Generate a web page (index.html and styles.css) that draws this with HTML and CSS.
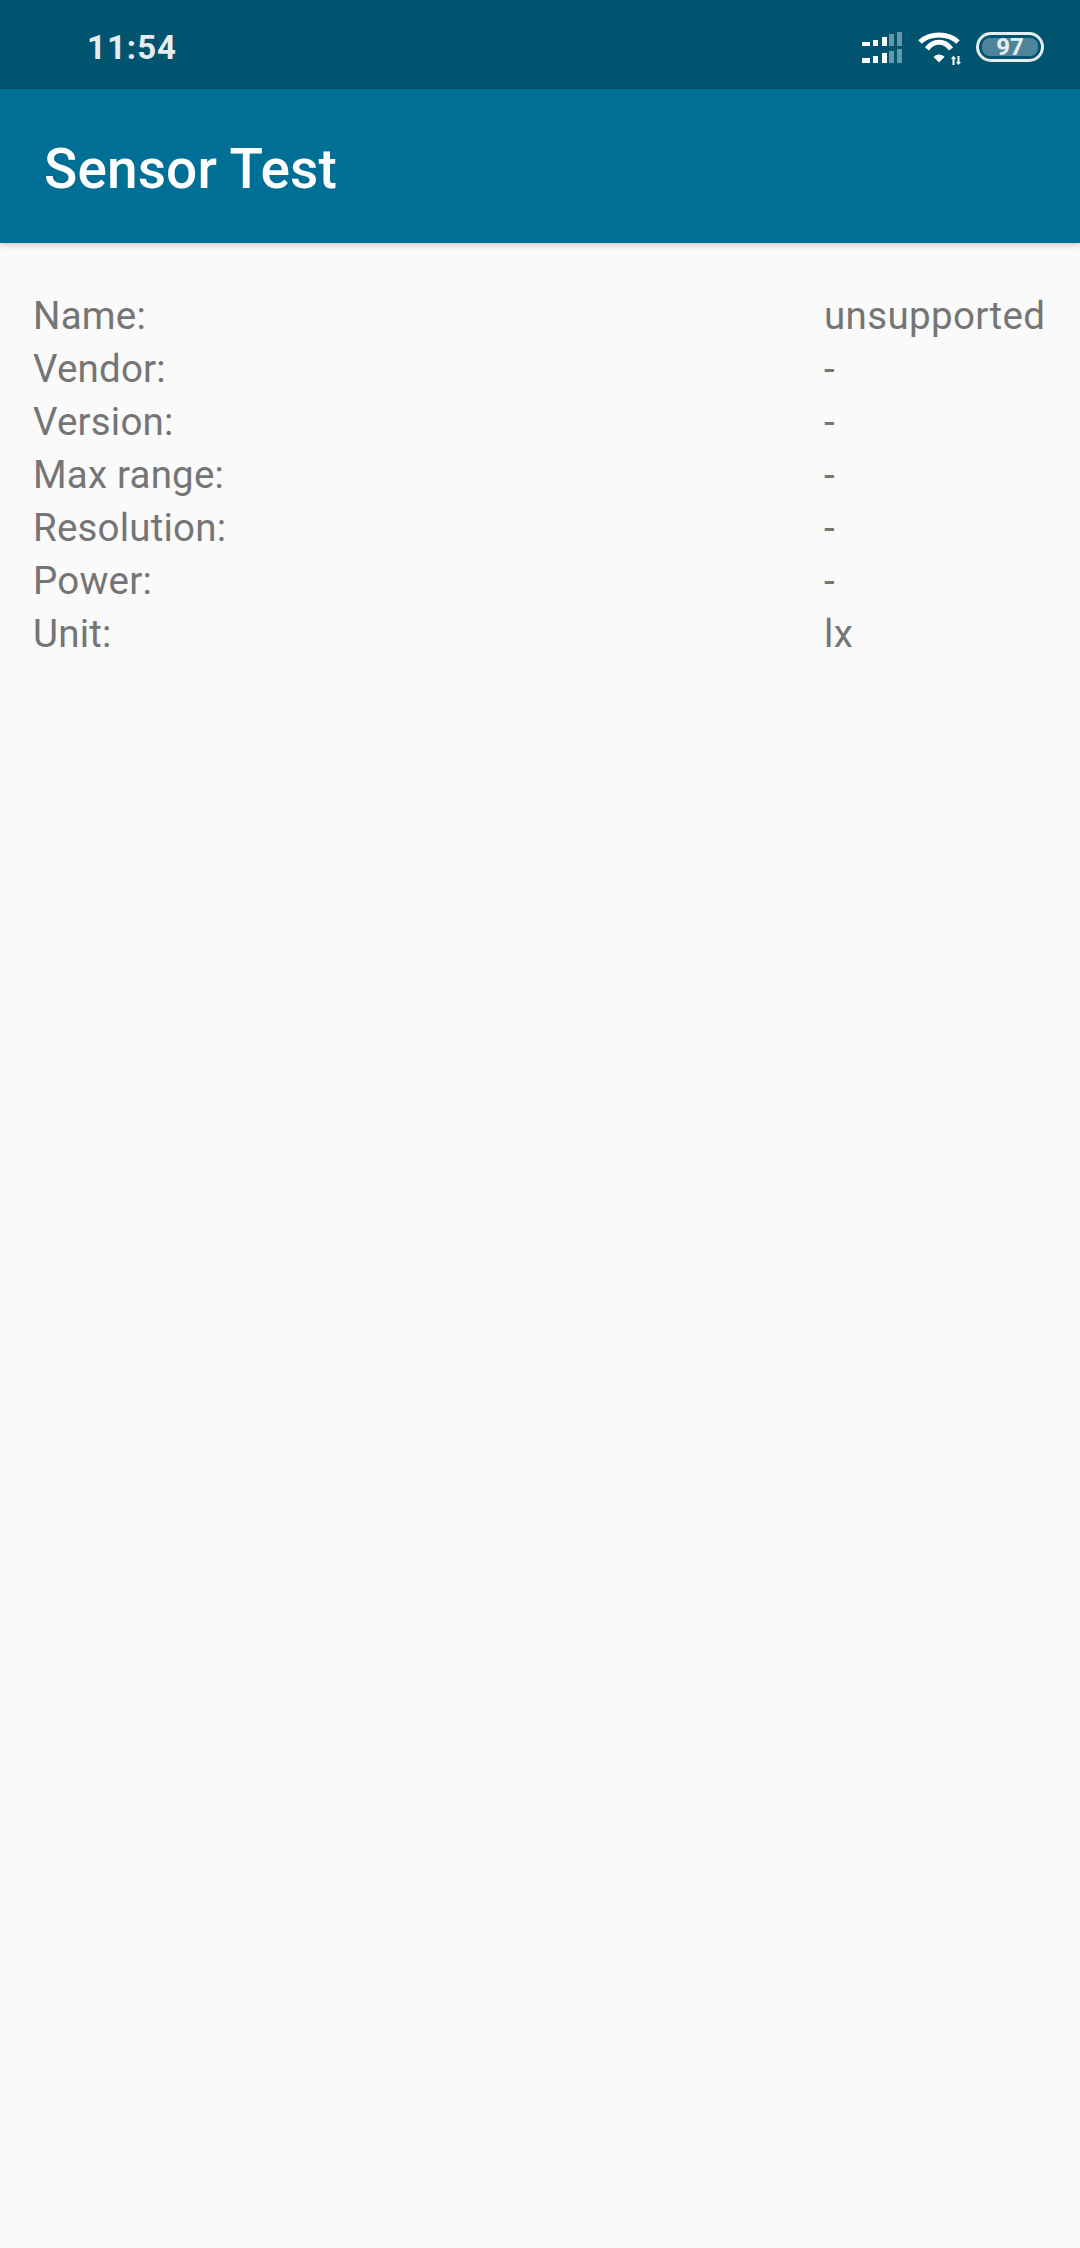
FILE: index.html
```html
<!doctype html>
<html>

<head>
	<meta http-equiv="Content-Type" content="text/html; charset=utf-8" />
	<title>Sensor Test</title>
	<link rel="stylesheet" href="styles.css">
</head>

<body>
	<div class="status">
		<span class="time">11:54</span>
		<div class="icons">
			<svg class="signal" width="40" height="34" viewBox="0 0 40 34">
				<g fill="#fff">
					<rect x="0" y="12" width="8" height="4" />
					<rect x="11" y="10" width="5" height="6" />
					<rect x="20" y="7" width="5" height="9" />
					<rect x="0" y="28" width="8" height="5" />
					<rect x="11" y="26" width="5" height="7" />
					<rect x="20" y="23" width="5" height="10" />
				</g>
				<g fill="#fff" opacity="0.4">
					<rect x="27" y="4" width="5" height="12" />
					<rect x="35" y="2" width="5" height="14" />
					<rect x="27" y="21" width="5" height="12" />
					<rect x="35" y="19" width="5" height="14" />
				</g>
			</svg>
			<svg class="wifi" width="44" height="36" viewBox="0 0 44 36">
				<g fill="none" stroke="#fff" stroke-width="5">
					<path d="M2 13 C12 3.700 30 3.700 40 13" />
					<path d="M9 20 C15 11 27 11 33 20" />
				</g>
				<path d="M15.500 28 C18 24.500 24 24.500 26.500 28 L21 33.500 Z" fill="#fff" />
				<path d="M34.500 30 h2 v6 h-2 z M33 30 h5 l-2.500 -3.500 z" fill="#fff" />
				<path d="M39.500 27 h2 v6 h-2 z M38 33 h5 l-2.500 3 z" fill="#fff" />
			</svg>
			<div class="battery"><span class="level">97</span></div>
		</div>
	</div>

	<div class="appbar">Sensor Test</div>

	<div class="info">
		<div class="row"><span class="key">Name:</span><span class="val">unsupported</span></div>
		<div class="row"><span class="key">Vendor:</span><span class="val">-</span></div>
		<div class="row"><span class="key">Version:</span><span class="val">-</span></div>
		<div class="row"><span class="key">Max range:</span><span class="val">-</span></div>
		<div class="row"><span class="key">Resolution:</span><span class="val">-</span></div>
		<div class="row"><span class="key">Power:</span><span class="val">-</span></div>
		<div class="row"><span class="key">Unit:</span><span class="val">lx</span></div>
	</div>
</body>

</html>
```

FILE: styles.css
```css
html,
body {
	margin: 0;
	padding: 0;
}

body {
	width: 1080px;
	height: 2248px;
	overflow: hidden;
	background: #fafafa;
	font-family: Roboto, sans-serif;
}

.status {
	height: 89px;
	background: #00546f;
	display: flex;
	align-items: center;
	justify-content: space-between;
	padding: 0 36px 0 87px;
	color: #e6edf0;
}

.time {
	font-size: 33px;
	font-weight: 700;
	letter-spacing: 1px;
	margin-top: 6px;
}

.icons {
	display: flex;
	align-items: center;
	margin-top: 5px;
}

.signal {
	margin-right: 16px;
}

.wifi {
	margin-right: 14px;
}

.battery {
	width: 68px;
	height: 30px;
	box-sizing: border-box;
	border: 3px solid #e6edf0;
	border-radius: 15px;
	padding: 3px;
}

.level {
	display: block;
	height: 18px;
	line-height: 18px;
	border-radius: 8px;
	background: #4f8599;
	text-align: center;
	font-size: 24px;
	font-weight: 700;
	color: #e6edf0;
}

.appbar {
	height: 154px;
	line-height: 160px;
	background: #006f96;
	color: #fff;
	font-size: 55px;
	font-weight: 500;
	letter-spacing: 0.1px;
	padding-left: 44px;
	box-shadow: 0 2px 6px rgba(0, 0, 0, 0.2);
	position: relative;
}

.info {
	padding: 46px 33px 0;
}

.row {
	display: flex;
	height: 53px;
	line-height: 53px;
	font-size: 38.500px;
	letter-spacing: 0.35px;
	color: #757575;
}

.key {
	width: 791px;
	letter-spacing: 0.2px;
}
```
